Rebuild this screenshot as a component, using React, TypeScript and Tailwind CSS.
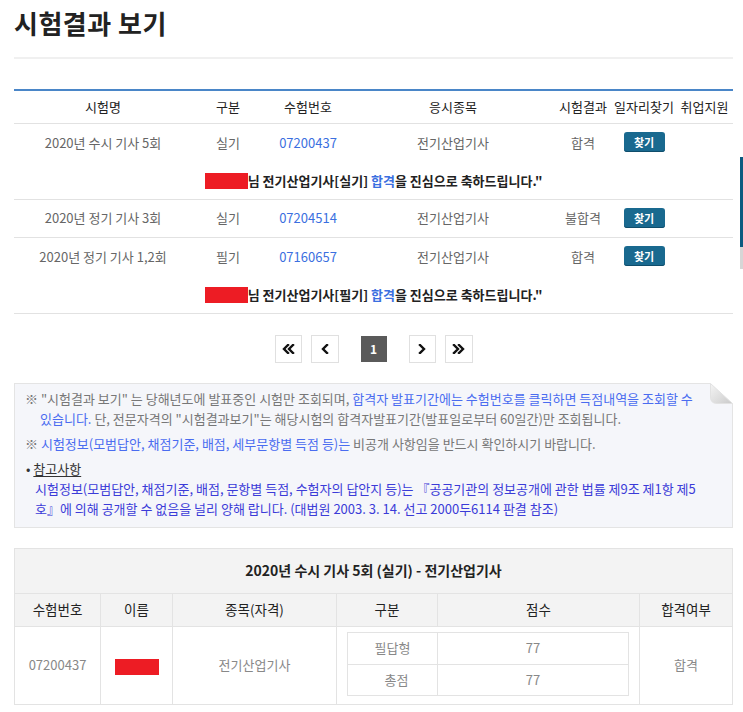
import React from "react";

const font = "font-['Noto_Sans_CJK_KR','Noto_Sans',sans-serif]";

const Arrow = ({ dir, double }: { dir: "left" | "right"; double?: boolean }) => {
  const d = dir === "left" ? "M6 1 L2 5 L6 9" : "M2 1 L6 5 L2 9";
  return (
    <svg width={double ? 13 : 8} height="10" viewBox={double ? "0 0 13 10" : "0 0 8 10"}>
      <path d={d} fill="none" stroke="#111" strokeWidth="2.4" strokeLinecap="square" />
      {double && (
        <path d={d} transform="translate(5 0)" fill="none" stroke="#111" strokeWidth="2.4" strokeLinecap="square" />
      )}
    </svg>
  );
};

const RedMark = ({ w = 43 }: { w?: number }) => (
  <span className="inline-block h-[16px] bg-[#ed1c24] align-middle" style={{ width: w }} />
);

const FindButton = () => (
  <button className="h-[20px] w-[41px] rounded-[3px] bg-[#19698f] text-[11px] font-bold leading-[20px] text-white shadow-[inset_0_-1px_0_#0f4d6b]">
    찾기
  </button>
);

const results = [
  { name: "2020년 수시 기사 5회", type: "실기", no: "07200437", subject: "전기산업기사", result: "합격", congrats: true },
  { name: "2020년 정기 기사 3회", type: "실기", no: "07204514", subject: "전기산업기사", result: "불합격", congrats: false },
  { name: "2020년 정기 기사 1,2회", type: "필기", no: "07160657", subject: "전기산업기사", result: "합격", congrats: true },
];

export default function App() {
  return (
    <div className={`relative min-h-screen bg-white pl-[14px] pr-[10px] pb-[20px] ${font}`}>
      {/* side bar at the edge */}
      <div className="absolute right-0 top-[157px] w-[3px]">
        <div className="h-[90px] bg-[#0b5a80]" />
        <div className="h-[22px] bg-[#d6d6d6]" />
      </div>

      <h1 className="pt-[7px] text-[26px] font-bold leading-[32px] tracking-[0.5px] text-[#222]">시험결과 보기</h1>
      <div className="mt-[18px] h-[2px] bg-[#f0f0f0]" />

      {/* result list */}
      <table className="mt-[30px] w-full table-fixed border-collapse border-t-2 border-[#4a86c8] text-[13px]">
        <colgroup>
          <col className="w-[178px]" />
          <col className="w-[72px]" />
          <col className="w-[88px]" />
          <col className="w-[202px]" />
          <col className="w-[58px]" />
          <col className="w-[64px]" />
          <col className="w-[57px]" />
        </colgroup>
        <thead>
          <tr className="h-[33px] border-b border-[#e2e2e2] text-[#222]">
            <th className="font-normal">시험명</th>
            <th className="font-normal">구분</th>
            <th className="font-normal">수험번호</th>
            <th className="font-normal">응시종목</th>
            <th className="whitespace-nowrap font-normal">시험결과</th>
            <th className="whitespace-nowrap font-normal">일자리찾기</th>
            <th className="whitespace-nowrap font-normal">취업지원</th>
          </tr>
        </thead>
        <tbody>
          {results.map((r) => (
            <React.Fragment key={r.no}>
              <tr className={`h-[38px] text-center text-[#666] ${r.congrats ? "" : "border-b border-[#e2e2e2]"}`}>
                <td className="whitespace-nowrap">{r.name}</td>
                <td>{r.type}</td>
                <td className="text-[#3b6fe0]">{r.no}</td>
                <td>{r.subject}</td>
                <td>{r.result}</td>
                <td>
                  <FindButton />
                </td>
                <td />
              </tr>
              {r.congrats && (
                <tr className="h-[38px] border-b border-[#e2e2e2]">
                  <td colSpan={7} className="text-center font-bold text-[#222]">
                    <RedMark />
                    <span className="align-middle">
                      님 전기산업기사[{r.type}] <span className="text-[#3b6fe0]">합격</span>을 진심으로 축하드립니다."
                    </span>
                  </td>
                </tr>
              )}
            </React.Fragment>
          ))}
        </tbody>
      </table>

      {/* pagination */}
      <div className="mt-[21px] flex items-center justify-center">
        <span className="flex h-[28px] w-[27px] items-center justify-center border border-[#e0e0e0]">
          <Arrow dir="left" double />
        </span>
        <span className="ml-[9px] flex h-[28px] w-[28px] items-center justify-center border border-[#e0e0e0]">
          <Arrow dir="left" />
        </span>
        <span className="ml-[22px] flex h-[26px] w-[26px] items-center justify-center bg-[#5a5a5a] text-[12px] font-bold text-white">
          1
        </span>
        <span className="ml-[22px] flex h-[28px] w-[27px] items-center justify-center border border-[#e0e0e0]">
          <Arrow dir="right" />
        </span>
        <span className="ml-[9px] flex h-[28px] w-[28px] items-center justify-center border border-[#e0e0e0]">
          <Arrow dir="right" double />
        </span>
      </div>

      {/* notice */}
      <div className="relative mt-[20px] border border-[#e4e4e4] bg-[#f5f6fa] pb-[8px] pl-[10px] pr-[20px] pt-[5px] text-[13px] leading-[20px] text-[#777]">
        <svg className="absolute -right-px -top-px" width="23" height="21" viewBox="0 0 23 21">
          <defs>
            <linearGradient id="fold" x1="0" y1="0" x2="1" y2="1">
              <stop offset="0" stopColor="#f4f4f4" />
              <stop offset="0.6" stopColor="#dcdcdc" />
              <stop offset="1" stopColor="#c9c9c9" />
            </linearGradient>
          </defs>
          <polygon points="0,0 23,0 23,21" fill="#fff" />
          <path d="M0.5 0.5 L22.5 20.5 L7 20.5 Q0.5 20.5 0.5 14 Z" fill="url(#fold)" stroke="#e2e2e2" />
        </svg>
        <p className="pl-[15px] -indent-[15px] whitespace-nowrap">
          ※ "시험결과 보기" 는 당해년도에 발표중인 시험만 조회되며,{" "}
          <span className="text-[#4a6cf0]">합격자 발표기간에는 수험번호를 클릭하면 득점내역을 조회할 수</span>
          <br />
          <span className="text-[#4a6cf0]">있습니다.</span> 단, 전문자격의 "시험결과보기"는 해당시험의 합격자발표기간(발표일로부터 60일간)만 조회됩니다.
        </p>
        <p className="mt-[5px]">
          ※ <span className="text-[#4a6cf0]">시험정보(모범답안, 채점기준, 배점, 세부문항별 득점 등)는</span> 비공개 사항임을 반드시 확인하시기 바랍니다.
        </p>
        <p className="mt-[5px] pl-[1px] text-[#333]">
          • <span className="underline underline-offset-2">참고사항</span>
        </p>
        <p className="whitespace-nowrap pl-[10px] text-[#3b3bd8]">
          시험정보(모범답안, 채점기준, 배점, 문항별 득점, 수험자의 답안지 등)는 『공공기관의 정보공개에 관한 법률 제9조 제1항 제5
          <br />
          호』에 의해 공개할 수 없음을 널리 양해 랍니다. (대법원 2003. 3. 14. 선고 2000두6114 판결 참조)
        </p>
      </div>

      {/* score detail */}
      <table className="mt-[20px] w-full table-fixed border-collapse border border-[#e3e3e3] text-center">
        <colgroup>
          <col className="w-[86px]" />
          <col className="w-[72px]" />
          <col className="w-[164px]" />
          <col className="w-[101px]" />
          <col className="w-[202px]" />
          <col className="w-[93px]" />
        </colgroup>
        <thead className="bg-[#f3f3f3]">
          <tr className="h-[45px] border-b border-[#e3e3e3]">
            <th colSpan={6} className="text-[14px] font-bold text-[#222]">
              2020년 수시 기사 5회 (실기) - 전기산업기사
            </th>
          </tr>
          <tr className="h-[33px] text-[13.5px] text-[#222]">
            <th className="border border-[#e3e3e3] font-normal">수험번호</th>
            <th className="border border-[#e3e3e3] font-normal">이름</th>
            <th className="border border-[#e3e3e3] font-normal">종목(자격)</th>
            <th className="border border-[#e3e3e3] font-normal">구분</th>
            <th className="border border-[#e3e3e3] font-normal">점수</th>
            <th className="border border-[#e3e3e3] font-normal">합격여부</th>
          </tr>
        </thead>
        <tbody className="text-[13px] text-[#888]">
          <tr className="h-[75px]">
            <td className="border border-[#e3e3e3]">07200437</td>
            <td className="border border-[#e3e3e3]">
              <RedMark w={44} />
            </td>
            <td className="border border-[#e3e3e3]">전기산업기사</td>
            <td colSpan={2} className="border border-[#e3e3e3] pb-[8px] pl-[10px] pr-[10px] pt-[5px]">
              <table className="w-full table-fixed border-collapse border border-[#e3e3e3]">
                <colgroup>
                  <col className="w-[90px]" />
                  <col />
                </colgroup>
                <tbody>
                  <tr className="h-[32px]">
                    <td className="border border-[#e3e3e3]">필답형</td>
                    <td className="border border-[#e3e3e3]">77</td>
                  </tr>
                  <tr className="h-[31px]">
                    <td className="border border-[#e3e3e3] pl-[8px]">총점</td>
                    <td className="border border-[#e3e3e3]">77</td>
                  </tr>
                </tbody>
              </table>
            </td>
            <td className="border border-[#e3e3e3]">합격</td>
          </tr>
        </tbody>
      </table>
    </div>
  );
}
